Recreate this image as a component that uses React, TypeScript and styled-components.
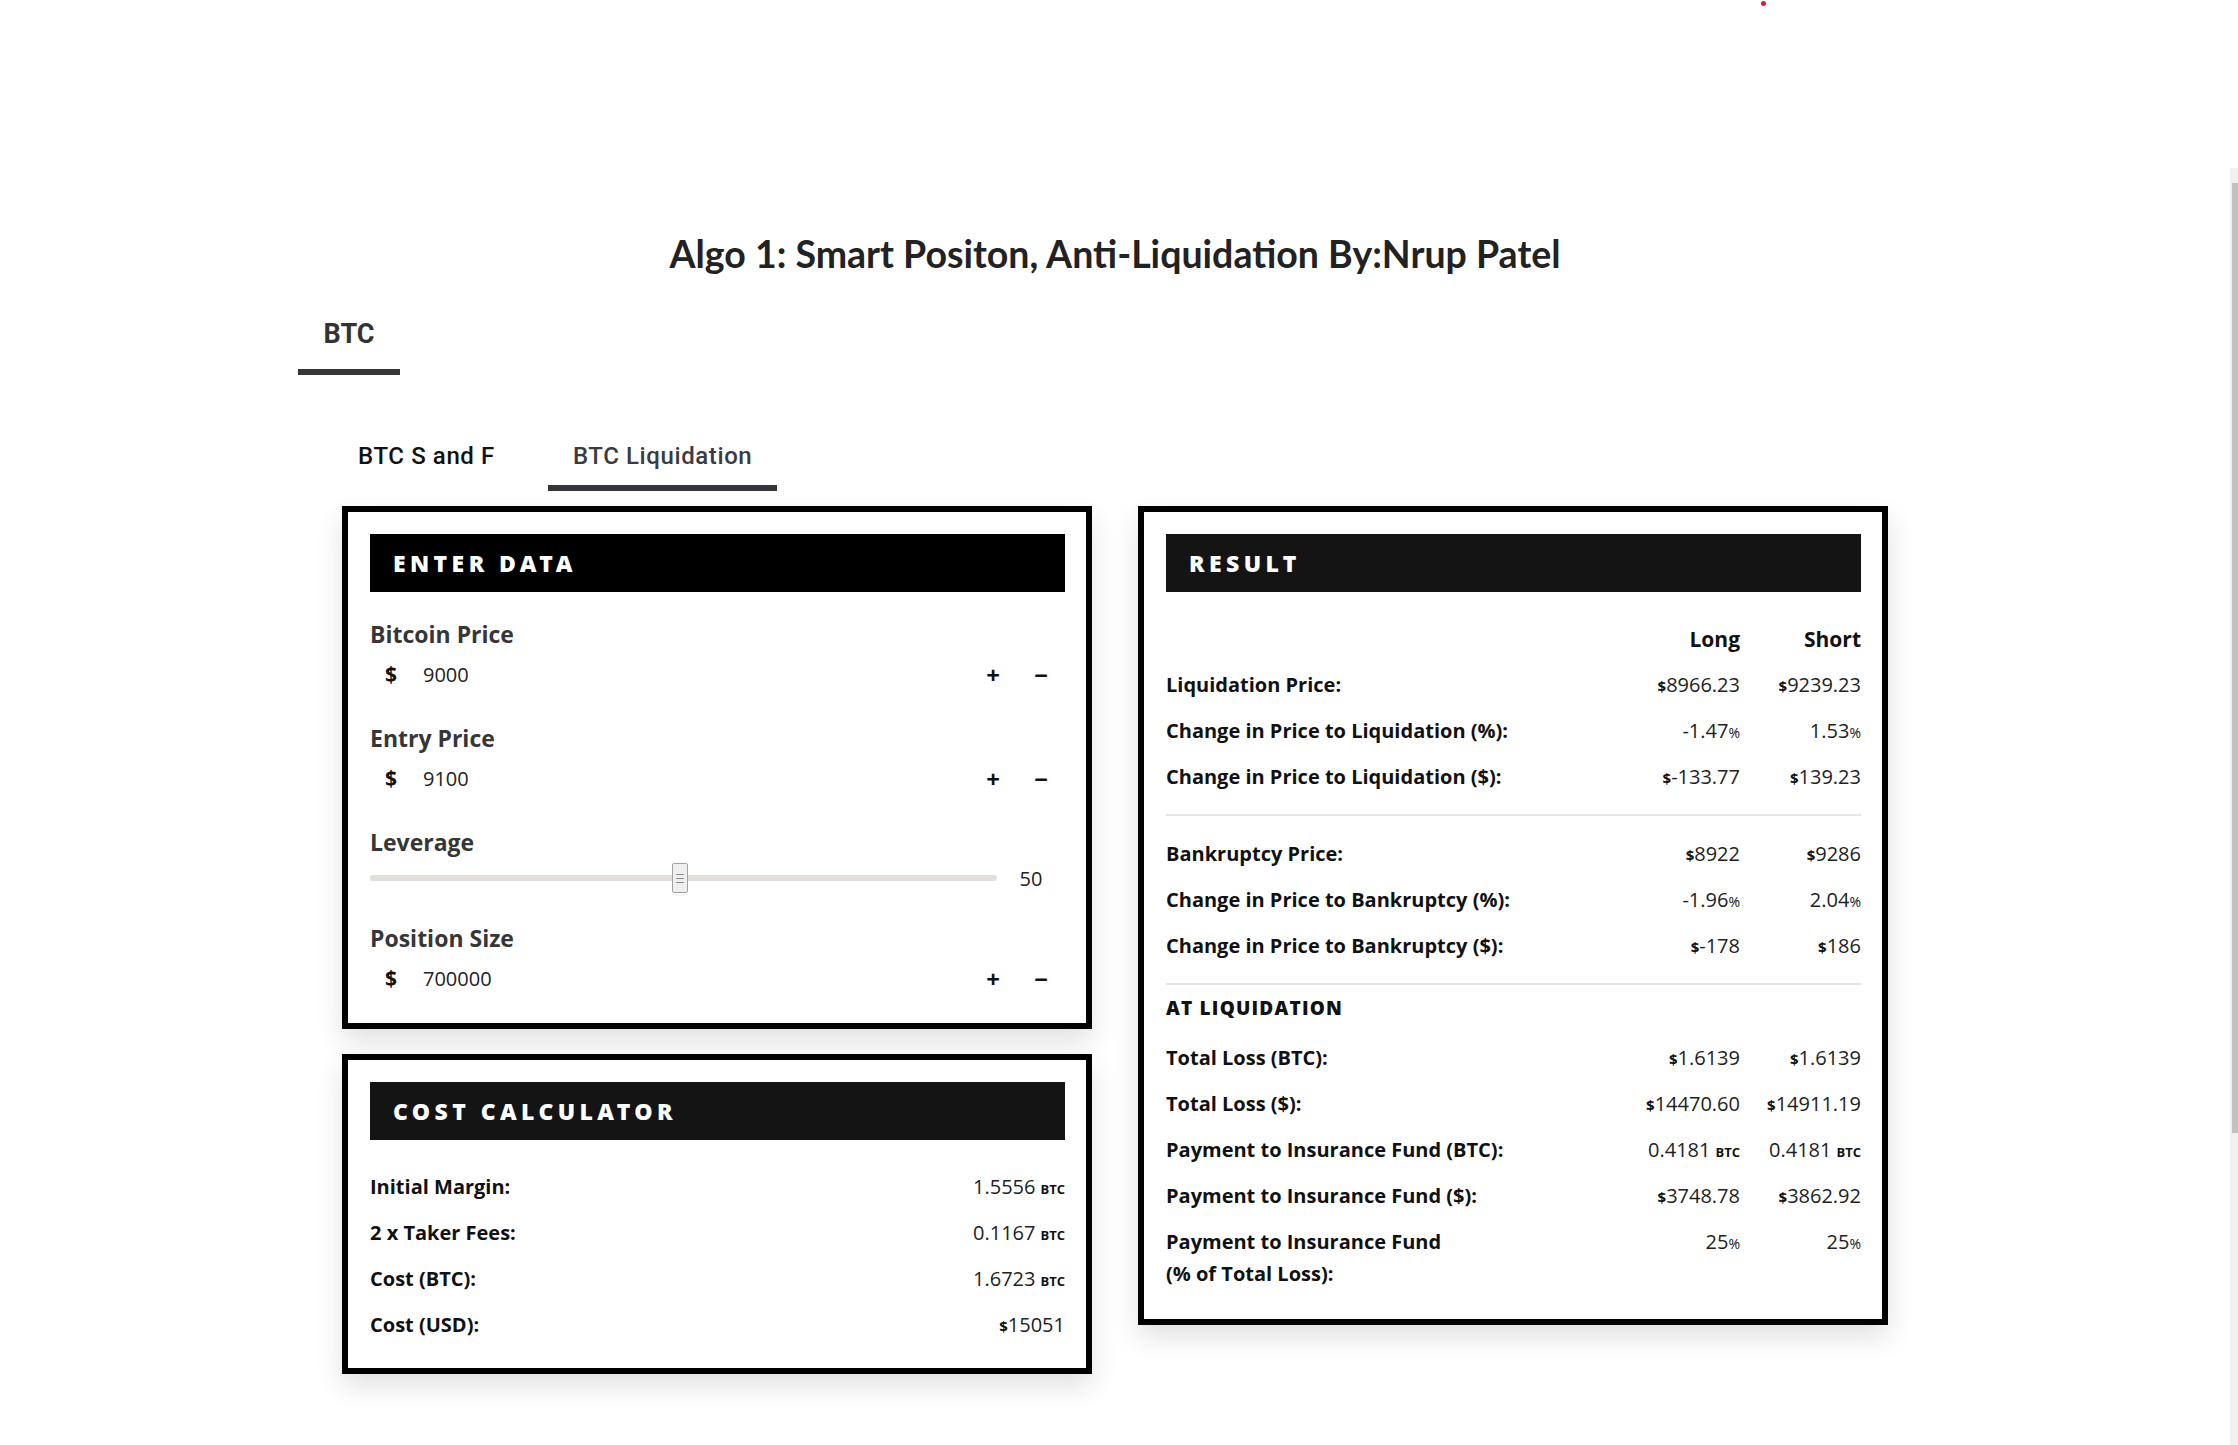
import React from 'react';
import styled, { createGlobalStyle } from 'styled-components';

const GlobalStyle = createGlobalStyle`
  html, body {
    margin: 0;
    padding: 0;
    height: 100%;
    background: #fff;
  }
  body {
    font-family: 'Open Sans', 'Noto Sans', sans-serif;
    color: #222;
  }
  #root {
    height: 100%;
  }
`;

const Page = styled.div`
  height: 100vh;
  display: flex;
  flex-direction: column;
  overflow: hidden;
`;

const TopBar = styled.header`
  flex: 0 0 168px;
  display: flex;
  align-items: flex-start;
`;

const Beacon = styled.span`
  width: 5px;
  height: 5px;
  border-radius: 50%;
  background: #d3202b;
  margin: 1px 0 0 1761px;
`;

const Body = styled.div`
  flex: 1;
  min-height: 0;
  display: flex;
`;

const Viewport = styled.main`
  flex: 1;
  min-width: 0;
  overflow: hidden;
`;

/* the page scroller's rail, drawn since the headless browser hides native bars */
const Rail = styled.div`
  flex: 0 0 8px;
  display: flex;
  flex-direction: column;
  background: #f0f0f0;
`;

const RailThumb = styled.span`
  width: 6px;
  height: 950px;
  margin: 15px 0 0 2px;
  background: #c1c1c1;
`;

const Content = styled.div`
  width: 1634px;
  margin: 0 auto;
  padding: 63px 0 80px;
`;

const Title = styled.h1`
  margin: 0;
  font-family: Lato, 'Open Sans', sans-serif;
  font-weight: 700;
  font-size: 37.5px;
  line-height: 46px;
  color: #222;
  text-align: center;
`;

const TabBar = styled.nav`
  display: flex;
  margin-top: 41px;
`;

const Tab = styled.div<{ active?: boolean }>`
  width: 102px;
  display: flex;
  justify-content: center;
  padding-bottom: 19px;
  border-bottom: 6px solid ${(p) => (p.active ? '#35363a' : 'transparent')};
  font-family: Roboto, Arial, sans-serif;
  font-weight: 700;
  font-size: 27px;
  line-height: 32px;
  color: #333;
`;

const SubTabs = styled.nav`
  display: flex;
  gap: 28px;
  margin: 67px 0 0 35px;
`;

const SubTab = styled.div<{ active?: boolean }>`
  padding: 0 25px 15px;
  border-bottom: 6px solid ${(p) => (p.active ? '#35363a' : 'transparent')};
  font-family: Roboto, Arial, sans-serif;
  font-weight: 500;
  font-size: 24px;
  line-height: 28px;
  letter-spacing: 0.6px;
  color: ${(p) => (p.active ? '#3a3b3f' : '#111')};
`;

const Board = styled.section`
  display: grid;
  grid-template-columns: 750px 750px;
  gap: 46px;
  align-items: start;
  margin: 15px 44px 0;
`;

const Column = styled.div`
  display: flex;
  flex-direction: column;
  gap: 25px;
`;

const Card = styled.article<{ bottom?: number }>`
  background: #fff;
  border: 6px solid #000;
  padding: 22px 21px ${(p) => p.bottom ?? 20}px 22px;
  box-shadow: 0 12px 26px rgba(0, 0, 0, 0.12);
`;

const CardHeader = styled.h2<{ tone?: 'black' | 'ink' }>`
  margin: 0;
  height: 58px;
  display: flex;
  align-items: center;
  padding-left: 23px;
  background: ${(p) => (p.tone === 'black' ? '#000' : '#141414')};
  color: #fff;
  font-family: 'Noto Sans', 'Open Sans', sans-serif;
  font-weight: 900;
  font-size: 23px;
  letter-spacing: 4.4px;
  text-transform: uppercase;
`;

const Fields = styled.div`
  display: flex;
  flex-direction: column;
  gap: 24px;
  margin-top: 26px;
`;

const Field = styled.div`
  display: flex;
  flex-direction: column;
`;

const FieldLabel = styled.label`
  font-weight: 700;
  font-size: 23px;
  line-height: 32px;
  color: #363636;
`;

const InputRow = styled.div`
  height: 48px;
  display: flex;
  align-items: center;
`;

const Currency = styled.span`
  width: 53px;
  box-sizing: border-box;
  padding-left: 15px;
  font-weight: 700;
  font-size: 21px;
  color: #111;
`;

const NumberInput = styled.input`
  flex: 1;
  min-width: 0;
  border: 0;
  outline: none;
  background: transparent;
  padding: 0;
  font-family: inherit;
  font-size: 20px;
  color: #222;
`;

const StepButton = styled.button`
  width: 48px;
  height: 48px;
  border: 0;
  background: transparent;
  padding: 0;
  font-family: 'Open Sans', sans-serif;
  font-weight: 700;
  font-size: 24px;
  color: #111;
  cursor: pointer;
`;

const SliderRow = styled.div`
  height: 40px;
  display: flex;
  align-items: center;
`;

const Track = styled.div`
  position: relative;
  flex: 1;
  height: 6px;
  border-radius: 3px;
  background: #e2dfda;
`;

const Thumb = styled.div`
  position: absolute;
  top: 50%;
  width: 16px;
  height: 30px;
  box-sizing: border-box;
  margin-left: -8px;
  transform: translateY(-50%);
  border: 1px solid #a3a3a3;
  border-radius: 2px;
  background: #efefef;
  display: flex;
  flex-direction: column;
  align-items: center;
  justify-content: center;
  gap: 3px;
`;

const Grip = styled.span`
  width: 8px;
  height: 1px;
  background: #8c8c8c;
`;

const SliderValue = styled.span`
  width: 68px;
  text-align: center;
  font-size: 20px;
  color: #222;
`;

const Rows = styled.div`
  margin-top: 24px;
`;

const Row = styled.div<{ cols?: number }>`
  display: grid;
  grid-template-columns: ${(p) => (p.cols === 2 ? '1fr 120px 121px' : '1fr auto')};
  align-items: start;
  padding: 7px 0;
  line-height: 32px;
`;

const RowLabel = styled.span`
  font-weight: 700;
  font-size: 20px;
  color: #111;
`;

const ColHead = styled.span`
  text-align: right;
  font-weight: 700;
  font-size: 21px;
  color: #111;
`;

const Value = styled.span`
  text-align: right;
  font-size: 20px;
  color: #222;
  white-space: nowrap;
`;

const Unit = styled.span<{ kind: 'sign' | 'pct' | 'coin' }>`
  font-size: ${(p) => (p.kind === 'coin' ? '13px' : p.kind === 'sign' ? '15px' : '14px')};
  font-weight: ${(p) => (p.kind === 'pct' ? 400 : 700)};
  line-height: 1;
  color: #111;
  margin-left: ${(p) => (p.kind === 'coin' ? '5px' : '0')};
`;

const Divider = styled.hr<{ after?: number }>`
  border: 0;
  height: 2px;
  background: #e6e6e6;
  margin: 14px 0 ${(p) => p.after ?? 15}px;
`;

const SectionTitle = styled.h3`
  margin: 0 0 10px;
  height: 34px;
  line-height: 34px;
  font-weight: 800;
  font-size: 19px;
  letter-spacing: 1.2px;
  color: #111;
`;

type Amount = { pre?: string; num: string; post?: 'pct' | 'coin' };

const Money = ({ pre, num, post }: Amount) => (
  <Value>
    {pre && <Unit kind="sign">{pre}</Unit>}
    {num}
    {post === 'pct' && <Unit kind="pct">%</Unit>}
    {post === 'coin' && <Unit kind="coin">BTC</Unit>}
  </Value>
);

type ResultLine = { label: React.ReactNode; long: Amount; short: Amount };

const liquidation: ResultLine[] = [
  { label: 'Liquidation Price:', long: { pre: '$', num: '8966.23' }, short: { pre: '$', num: '9239.23' } },
  { label: 'Change in Price to Liquidation (%):', long: { num: '-1.47', post: 'pct' }, short: { num: '1.53', post: 'pct' } },
  { label: 'Change in Price to Liquidation ($):', long: { pre: '$', num: '-133.77' }, short: { pre: '$', num: '139.23' } },
];

const bankruptcy: ResultLine[] = [
  { label: 'Bankruptcy Price:', long: { pre: '$', num: '8922' }, short: { pre: '$', num: '9286' } },
  { label: 'Change in Price to Bankruptcy (%):', long: { num: '-1.96', post: 'pct' }, short: { num: '2.04', post: 'pct' } },
  { label: 'Change in Price to Bankruptcy ($):', long: { pre: '$', num: '-178' }, short: { pre: '$', num: '186' } },
];

const atLiquidation: ResultLine[] = [
  { label: 'Total Loss (BTC):', long: { pre: '$', num: '1.6139' }, short: { pre: '$', num: '1.6139' } },
  { label: 'Total Loss ($):', long: { pre: '$', num: '14470.60' }, short: { pre: '$', num: '14911.19' } },
  { label: 'Payment to Insurance Fund (BTC):', long: { num: '0.4181', post: 'coin' }, short: { num: '0.4181', post: 'coin' } },
  { label: 'Payment to Insurance Fund ($):', long: { pre: '$', num: '3748.78' }, short: { pre: '$', num: '3862.92' } },
  {
    label: (
      <>
        Payment to Insurance Fund
        <br />
        (% of Total Loss):
      </>
    ),
    long: { num: '25', post: 'pct' },
    short: { num: '25', post: 'pct' },
  },
];

const costs: { label: string; amount: Amount }[] = [
  { label: 'Initial Margin:', amount: { num: '1.5556', post: 'coin' } },
  { label: '2 x Taker Fees:', amount: { num: '0.1167', post: 'coin' } },
  { label: 'Cost (BTC):', amount: { num: '1.6723', post: 'coin' } },
  { label: 'Cost (USD):', amount: { pre: '$', num: '15051' } },
];

const ResultRows = ({ lines }: { lines: ResultLine[] }) => (
  <>
    {lines.map((line, i) => (
      <Row cols={2} key={i}>
        <RowLabel>{line.label}</RowLabel>
        <Money {...line.long} />
        <Money {...line.short} />
      </Row>
    ))}
  </>
);

const MoneyField = ({ label, value }: { label: string; value: string }) => (
  <Field>
    <FieldLabel>{label}</FieldLabel>
    <InputRow>
      <Currency>$</Currency>
      <NumberInput readOnly value={value} />
      <StepButton>+</StepButton>
      <StepButton>−</StepButton>
    </InputRow>
  </Field>
);

const Leverage = ({ value, min, max }: { value: number; min: number; max: number }) => {
  const pct = ((value - min) / (max - min)) * 100;
  return (
    <Field>
      <FieldLabel>Leverage</FieldLabel>
      <SliderRow>
        <Track>
          <Thumb style={{ left: `${pct}%` }}>
            <Grip />
            <Grip />
            <Grip />
          </Thumb>
        </Track>
        <SliderValue>{value}</SliderValue>
      </SliderRow>
    </Field>
  );
};

export default function App() {
  return (
    <>
      <GlobalStyle />
      <Page>
        <TopBar>
          <Beacon />
        </TopBar>
        <Body>
          <Viewport>
            <Content>
              <Title>Algo 1: Smart Positon, Anti-Liquidation By:Nrup Patel</Title>

              <TabBar>
                <Tab active>BTC</Tab>
              </TabBar>

              <SubTabs>
                <SubTab>BTC S and F</SubTab>
                <SubTab active>BTC Liquidation</SubTab>
              </SubTabs>

              <Board>
                <Column>
                  <Card bottom={21}>
                    <CardHeader tone="black">Enter Data</CardHeader>
                    <Fields>
                      <MoneyField label="Bitcoin Price" value="9000" />
                      <MoneyField label="Entry Price" value="9100" />
                      <Leverage value={50} min={1} max={100} />
                      <MoneyField label="Position Size" value="700000" />
                    </Fields>
                  </Card>

                  <Card>
                    <CardHeader>Cost Calculator</CardHeader>
                    <Rows>
                      {costs.map((c) => (
                        <Row key={c.label}>
                          <RowLabel>{c.label}</RowLabel>
                          <Money {...c.amount} />
                        </Row>
                      ))}
                    </Rows>
                  </Card>
                </Column>

                <Card bottom={22}>
                  <CardHeader>Result</CardHeader>
                  <Rows>
                    <Row cols={2}>
                      <span />
                      <ColHead>Long</ColHead>
                      <ColHead>Short</ColHead>
                    </Row>
                    <ResultRows lines={liquidation} />
                    <Divider />
                    <ResultRows lines={bankruptcy} />
                    <Divider after={6} />
                    <SectionTitle>AT LIQUIDATION</SectionTitle>
                    <ResultRows lines={atLiquidation} />
                  </Rows>
                </Card>
              </Board>
            </Content>
          </Viewport>
          <Rail>
            <RailThumb />
          </Rail>
        </Body>
      </Page>
    </>
  );
}
